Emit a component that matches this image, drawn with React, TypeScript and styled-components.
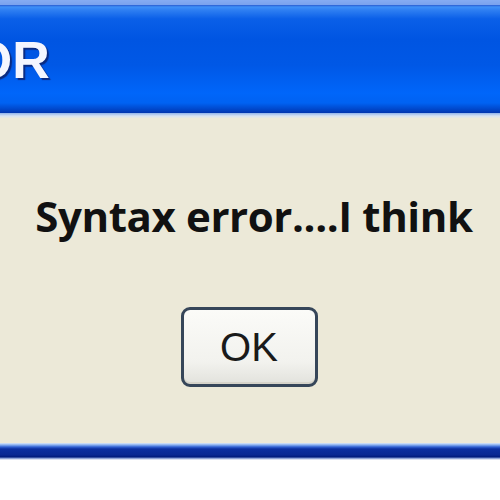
import React from "react";
import styled, { createGlobalStyle } from "styled-components";

const Global = createGlobalStyle`
  html, body { margin: 0; padding: 0; background: #ffffff; }
  #root { width: 500px; height: 500px; overflow: hidden; }
`;

const Window = styled.div`
  width: 500px;
  display: flex;
  flex-direction: column;
`;

const TopStrip = styled.div`
  height: 5px;
  background: linear-gradient(#86acf2, #7aa2ee);
`;

const TitleBar = styled.div`
  height: 108px;
  display: flex;
  align-items: center;
  overflow: hidden;
  background: linear-gradient(
    #2a5cd0 0px,
    #3f90f8 2px,
    #2f7ff2 5px,
    #0a5fe8 14px,
    #0055e2 35px,
    #0058e6 60px,
    #0066fa 88px,
    #0062f2 98px,
    #0048cc 104px,
    #0034ae 108px
  );
`;

const TitleText = styled.span<{ $offset: number }>`
  font-family: "Liberation Sans", Arial, sans-serif;
  font-weight: 700;
  font-size: 52px;
  color: #f4f6ff;
  white-space: nowrap;
  margin-left: ${(p) => p.$offset}px;
  margin-top: 2px;
  text-shadow: 2px 2px 1px #0a2a80;
`;

const EdgeLine = styled.div`
  height: 5px;
  background: linear-gradient(#8fb2ea, #d6e2f2 60%, #e6e8e0);
`;

const Body = styled.div`
  height: 325px;
  background: #ece9d8;
  display: flex;
  flex-direction: column;
  align-items: center;
  box-sizing: border-box;
  padding-top: 73px;
`;

const Message = styled.div`
  font-family: "Open Sans", "DejaVu Sans", sans-serif;
  font-weight: 700;
  font-size: 42px;
  line-height: 50px;
  color: #111111;
  margin-left: 8px;
  letter-spacing: -0.4px;
  white-space: nowrap;
`;

const OkButton = styled.button`
  margin-top: 66px;
  width: 137px;
  height: 80px;
  box-sizing: border-box;
  border: 3px solid #364659;
  border-radius: 9px;
  background: linear-gradient(#fbfbf8, #f2f2ee 70%, #e2e2dc);
  box-shadow: inset 0 -2px 0 #d6d4ca;
  font-family: "Liberation Sans", Arial, sans-serif;
  font-size: 40px;
  color: #1a1a1a;
  padding: 0;
  margin-right: 2px;
`;

const BottomFrame = styled.div`
  height: 17px;
  background: linear-gradient(
    #dbe8f8 0px,
    #86aef0 2px,
    #2f5fd0 4px,
    #0b2fa0 6px,
    #082892 12px,
    #001a7a 14px,
    #6b86c8 15px,
    #ffffff 17px
  );
`;

export default function App() {
  return (
    <>
      <Global />
      <Window>
        <TopStrip />
        <TitleBar>
          <TitleText $offset={-138}>ERROR</TitleText>
        </TitleBar>
        <EdgeLine />
        <Body>
          <Message>Syntax error....I think</Message>
          <OkButton>OK</OkButton>
        </Body>
        <BottomFrame />
      </Window>
    </>
  );
}
